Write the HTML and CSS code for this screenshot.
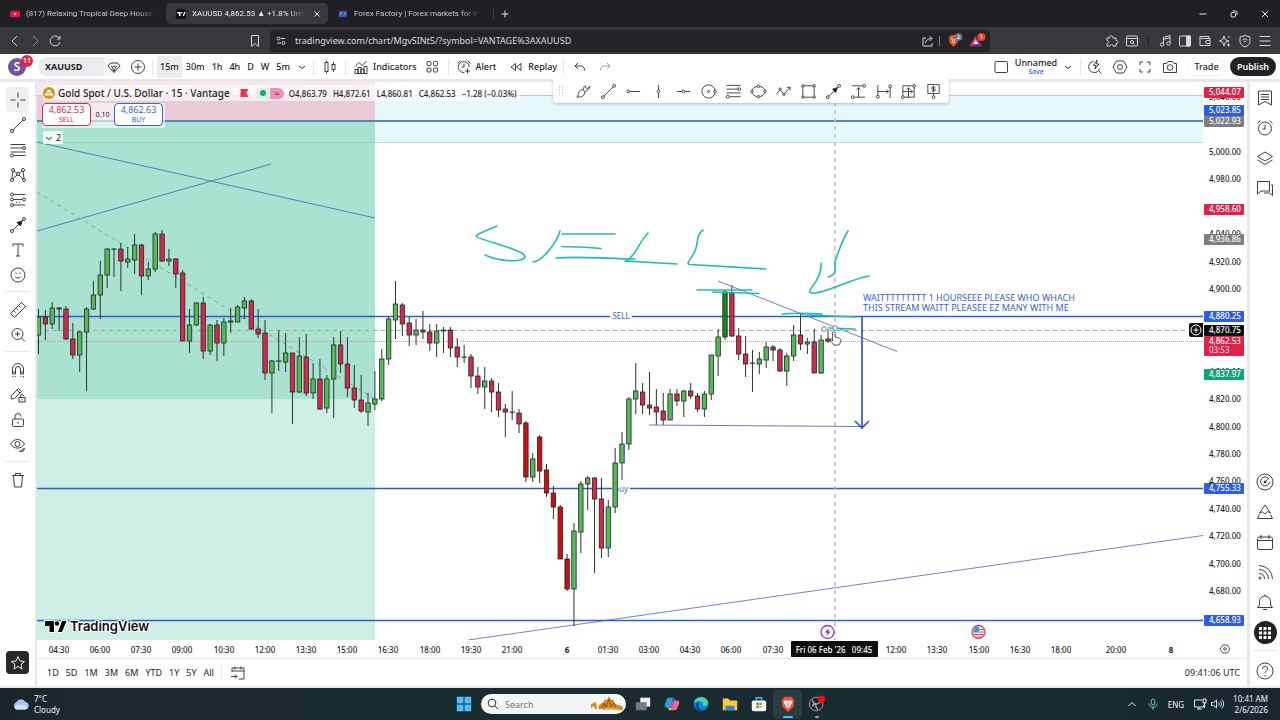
FILE: index.html
```html
<!DOCTYPE html>
<html lang="en">
<head>
  <meta charset="UTF-8" />
  <meta name="viewport" content="width=device-width, initial-scale=1.0" />
  <title>XAUUSD 4,862.53 ▲ +1.8% Unnamed</title>
  <link rel="stylesheet" href="styles.css">
</head>
<body>
  <!-- Browser tabs -->
  <header class="tabs">
    <a class="tab tab-first" href="#">
      <svg class="favicon" viewBox="0 0 12 12"><rect x="0" y="2" width="12" height="8" rx="2" fill="#f0103c"/><path d="M5 4.2v3.6L8 6z" fill="#fff"/></svg>
      <span class="tab-title">(817) Relaxing Tropical Deep House 2</span>
    </a>
    <div class="tab active">
      <svg class="favicon" viewBox="0 0 12 12"><rect x="0" y="0" width="12" height="12" rx="2" fill="#111"/><path d="M1.5 3.5h4v5h-2v-3h-2zM8 8.500l1.800-5h1.700l-2 5z" fill="#fff"/><circle cx="7" cy="4.500" r="1" fill="#fff"/></svg>
      <span class="tab-title">XAUUSD 4,862.53 ▲ +1.8% Unna</span>
      <button class="tab-close" aria-label="Close tab"><svg viewBox="0 0 8 8"><path d="M1.500 1.500l5 5M6.500 1.500l-5 5"/></svg></button>
    </div>
    <a class="tab" href="#">
      <svg class="favicon" viewBox="0 0 12 12"><path d="M1 2h10v8H0z" fill="#2c4a9c"/><path d="M3 9V4h3M3 6.500h2M7 9l1-5h2M8 6.500h2" stroke="#7d9ae0" fill="none"/></svg>
      <span class="tab-title">Forex Factory | Forex markets for the</span>
    </a>
    <span class="tab-sep"></span>
    <button class="new-tab" aria-label="New tab"><svg viewBox="0 0 8 8"><path d="M4 0.500v7M0.500 4h7"/></svg></button>
    <div class="window-buttons">
      <button aria-label="Minimize"><svg viewBox="0 0 8 8"><path d="M.5 4h7"/></svg></button>
      <button aria-label="Restore"><svg viewBox="0 0 8 8"><rect x="1" y="2.500" width="4.500" height="4.500" rx="1"/><path d="M3 1h2.500a1.500 1.500 0 0 1 1.500 1.500V5"/></svg></button>
      <button aria-label="Close"><svg viewBox="0 0 8 8"><path d="M1 1l6 6M7 1l-6 6"/></svg></button>
    </div>
  </header>

  <!-- Address row -->
  <nav class="navbar">
    <div class="nav-left">
      <button aria-label="Back"><svg viewBox="0 0 14 14"><path d="M9 2L4 7l5 5"/></svg></button>
      <button class="dim" aria-label="Forward"><svg viewBox="0 0 14 14"><path d="M5 2l5 5-5 5"/></svg></button>
      <button aria-label="Reload"><svg viewBox="0 0 14 14"><path d="M11.500 4.500A5 5 0 1 0 12 8M12 2v3H9"/></svg></button>
    </div>
    <button class="bookmark" aria-label="Bookmark"><svg viewBox="0 0 14 14"><path d="M3.500 1.500h7v11L7 9.500l-3.500 3z"/></svg></button>
    <div class="address">
      <svg viewBox="0 0 14 14"><circle cx="4.500" cy="4.500" r="1.500"/><path d="M7 4.500h4M3 9h4"/><circle cx="9.500" cy="9" r="1.500"/></svg>
      <label class="hidden" for="url">Address</label>
      <input id="url" type="text" value="tradingview.com/chart/MgvSINt5/?symbol=VANTAGE%3AXAUUSD">
      <svg viewBox="0 0 14 14"><path d="M5 4H2v8h9V9M4.500 9c.5-3 2.500-4.500 6-4.500M8.500 2L11 4.500 8.500 7"/></svg>
      <span class="address-sep"></span>
      <svg class="shield" viewBox="0 0 18 18"><path d="M4 5l2-2h5l2 2-.5 5.500-4 4.500-4-4.500z" fill="#f0512a" stroke="none"/><path d="M6 6.500l1.500 1v2L8.500 11l1-1.500v-2l1.500-1" stroke="#fff"/><circle cx="13.500" cy="5" r="3.800" fill="#6f7885" stroke="none"/><text x="13.500" y="7.200" class="mini">2</text></svg>
      <svg class="shield" viewBox="0 0 18 18"><path d="M8 4l6.500 10.500H1.500z" fill="#7a2a9c" stroke="none"/><path d="M8 4L1.500 14.500 8 11z" fill="#f04a3a" stroke="none"/><path d="M8 8l2.500 4h-5z" fill="#fff" stroke="none"/><circle cx="13.500" cy="5" r="4" fill="#f0432c" stroke="none"/><text x="13.500" y="7.200" class="mini">1</text></svg>
    </div>
    <div class="nav-right">
      <button aria-label="Extensions"><svg viewBox="0 0 14 14"><path d="M2 4h2.500c-.5-3 4-3 3.500 0h3v2.500c2.500-.3 2.500 3.500 0 3.200V12H8c0-2-3-2-3 0H2V9.500c2 0 2-3 0-3z"/></svg></button>
      <button aria-label="Search tabs"><svg viewBox="0 0 14 14"><rect x="1.500" y="2" width="11" height="10" rx="1"/><path d="M1.500 4.500h11M8 9l1.500 1.500"/><circle cx="7" cy="8" r="1.500"/></svg></button>
      <span class="nav-sep"></span>
      <button aria-label="Music"><svg viewBox="0 0 14 14"><path d="M5.500 10V3.500l6.500-2V9M5.500 5.500L12 3.500"/><circle cx="4" cy="10.500" r="1.700"/><circle cx="10.500" cy="9.500" r="1.700"/></svg></button>
      <button aria-label="Sidebar"><svg viewBox="0 0 14 14"><rect x="1.500" y="2" width="11" height="10" rx="1"/><path d="M8.500 2h4v10h-4z" fill="#ddd"/></svg></button>
      <button aria-label="Wallet"><svg viewBox="0 0 14 14"><path d="M11 4.500V2.500H2v9h10v-7H3M12 6.500H9a1.500 1.500 0 0 0 0 3h3"/></svg></button>
      <button aria-label="Leo"><svg viewBox="0 0 14 14"><path d="M6 2l1.300 3.700L11 7 7.300 8.300 6 12 4.700 8.300 1.500 7l3.200-1.300zM10.500 9.500v3M9 11h3M11 2v2"/></svg></button>
      <button aria-label="VPN"><svg viewBox="0 0 14 14"><path d="M7 1.500l5 1.500v4.500c0 2.500-2 4-5 5.500-3-1.500-5-3-5-5.500V3z"/><path d="M4.500 6c1.500-1.500 3.500-1.500 5 0M5.500 8c1-1 2-1 3 0"/></svg></button>
      <button aria-label="Menu"><svg viewBox="0 0 14 14"><path d="M1.500 2.500h11M1.500 7h11M1.500 11.500h11"/></svg></button>
    </div>
  </nav>

  <!-- Chart top toolbar -->
  <div class="topbar">
    <button class="avatar">S<span class="badge">11</span></button>
    <button class="symbol"><b>XAUUSD</b><svg class="icon" viewBox="0 0 18 18"><path d="M5.500 5h7l2.500 3-6 6.500L3 8zM6 8l1 1M8 8.500h2M11 9l1-1M7 8.500l2 5 2-5"/></svg></button>
    <button class="plus" aria-label="Compare"><svg class="icon" viewBox="0 0 18 18"><circle cx="9" cy="9" r="6.500"/><path d="M9 5.500v7M5.500 9h7"/></svg></button>
    <span class="sep"></span>
    <div class="intervals">
      <button class="selected">15m</button><button>30m</button><button>1h</button><button>4h</button><button>D</button><button>W</button><button>5m</button>
      <button aria-label="More intervals"><svg class="caret" viewBox="0 0 8 8"><path d="M1 3l3 2.500L7 3"/></svg></button>
    </div>
    <span class="sep"></span>
    <button class="square" aria-label="Chart type"><svg class="icon" viewBox="0 0 18 18"><path d="M5.500 2.500v2M5.500 13.500v2M12.500 4v2.500M12.500 11.500V14"/><rect x="4" y="4.500" width="3" height="9"/><rect x="11" y="6.500" width="3" height="5"/></svg></button>
    <span class="sep"></span>
    <button class="labelled indicators"><svg class="icon" viewBox="0 0 18 18"><path d="M3 15.500v-4h3v4M6 15.500V9.500h3v6M9 15.500v-4.500h3v4.500M12 15.500V8.500h3v7zM3 15.500h12M3 8.500l4-4 3 3 4.500-4.500"/></svg>Indicators</button>
    <button class="square" aria-label="Layouts"><svg class="icon" viewBox="0 0 18 18"><rect x="4" y="3.500" width="4" height="4" rx="1"/><rect x="10.500" y="3.500" width="4" height="4" rx="1"/><rect x="4" y="10" width="4" height="4" rx="1"/><rect x="10.500" y="10" width="4" height="4" rx="1"/></svg></button>
    <span class="sep"></span>
    <button class="labelled alert"><svg class="icon" viewBox="0 0 18 18"><path d="M14.300 9a5.500 5.500 0 1 0-5 5.500M9 5.500V9H6.500M2.500 5.500l3-3M12.500 2.500l3 3M12.500 10.500v5M10 13h5"/></svg>Alert</button>
    <button class="labelled replay"><svg class="icon" viewBox="0 0 18 18"><path d="M8.500 5.500v7L4 9zM14 5.500v7L9.500 9z"/></svg>Replay</button>
    <span class="sep"></span>
    <button class="square wide" aria-label="Undo"><svg class="icon" viewBox="0 0 18 18"><path d="M7 5L4 8l3 3M4 8h5.500c3 0 4 1.500 4 4.500"/></svg></button>
    <button class="square dim" aria-label="Redo"><svg class="icon" viewBox="0 0 18 18"><path d="M11 5l3 3-3 3M14 8H8.500c-3 0-4 1.500-4 4.500"/></svg></button>

    <div class="topbar-right">
      <button class="square" aria-label="Layout setup"><svg class="icon" viewBox="0 0 18 18"><rect x="3" y="3.500" width="12.500" height="11" rx="1"/></svg></button>
      <button class="layout-name">Unnamed<span>Save</span></button>
      <button class="caret-btn" aria-label="Manage layouts"><svg class="caret" viewBox="0 0 8 8"><path d="M1 3l3 2.500L7 3"/></svg></button>
      <span class="sep"></span>
      <button class="square" aria-label="Quick search"><svg class="icon" viewBox="0 0 18 18"><path d="M7.500 3.500a5.500 5.500 0 1 0 6 7M12.500 12.500l3 3M11 2L7.500 7.500h2.500L9 11l4-5h-2.500z"/></svg></button>
      <button class="square" aria-label="Settings"><svg class="icon" viewBox="0 0 18 18"><path d="M5.500 3h7L16 9l-3.500 6h-7L2 9z"/><circle cx="9" cy="9" r="2.500"/></svg></button>
      <button class="square" aria-label="Fullscreen"><svg class="icon" viewBox="0 0 18 18"><path d="M4 7V4h3M11 4h3v3M14 11v3h-3M7 14H4v-3"/></svg></button>
      <button class="square" aria-label="Snapshot"><svg class="icon" viewBox="0 0 18 18"><path d="M2.500 5.500h3l1.500-2h4.500l1.500 2h2.500v9h-13z"/><circle cx="9" cy="9.500" r="2.800"/></svg></button>
      <button class="trade">Trade</button>
      <button class="publish">Publish</button>
    </div>
  </div>

  <main class="workspace">
    <!-- Drawing tools -->
    <aside class="tools">
      <button class="selected" aria-label="Cross"><svg class="icon" viewBox="0 0 18 18"><path d="M9 1.500v5M9 11.500v5M1.500 9h5M11.500 9h5"/></svg></button>
      <button aria-label="Trend line"><svg class="icon" viewBox="0 0 18 18"><path d="M4 14L14 4"/><circle cx="3" cy="15" r="1.500"/><circle cx="15" cy="3" r="1.500"/></svg></button>
      <button aria-label="Fib retracement"><svg class="icon" viewBox="0 0 18 18"><path d="M1.500 3.500h15M1.500 7h12M1.500 11h15M4.500 14.500h12"/><circle cx="15" cy="7" r="1.500"/><circle cx="3" cy="14.500" r="1.500"/></svg></button>
      <button aria-label="Patterns"><svg class="icon" viewBox="0 0 18 18"><circle cx="4" cy="4" r="1.500"/><circle cx="14" cy="4" r="1.500"/><circle cx="9" cy="8" r="1.500"/><circle cx="3" cy="14" r="1.500"/><circle cx="15" cy="14" r="1.500"/><path d="M4 5.500L3 12.500M14 5.500l1 7M5 5l3 2.500M10 7.500L13 5M4 13l4-4M10 9l4 4"/></svg></button>
      <button aria-label="Forecasting"><svg class="icon" viewBox="0 0 18 18"><path d="M4.500 3.500h12M4.500 8.500h9M4.500 14h12"/><circle cx="3" cy="3.500" r="1.500"/><circle cx="3" cy="8.500" r="1.500"/><circle cx="15" cy="8.500" r="1.500"/><circle cx="3" cy="14" r="1.500"/><path d="M7 11.500h6" stroke-dasharray="1 2"/></svg></button>
      <button aria-label="Arrow"><svg class="icon" viewBox="0 0 18 18"><path d="M4 14L14 4"/><circle cx="3" cy="15" r="1.500"/><circle cx="15" cy="3" r="1.500"/><path d="M13 5l-1.500 5L8 6.500z" fill="#111"/></svg></button>
      <button aria-label="Text"><svg class="icon" viewBox="0 0 18 18"><path d="M4 5.500V3h10v2.500M9 3v12M7 15h4"/></svg></button>
      <button aria-label="Icons"><svg class="icon" viewBox="0 0 18 18"><circle cx="9" cy="9" r="7"/><path d="M6 10.500c1.500 2 4.500 2 6 0M7 6.500v1.500M11 6.500v1.500"/></svg></button>
      <hr>
      <button aria-label="Measure"><svg class="icon" viewBox="0 0 18 18"><path d="M1.500 12.500l11-11 4 4-11 11zM5 10l1.500 1.500M7.500 7.500L9 9M10 5l1.500 1.500"/></svg></button>
      <button aria-label="Zoom in"><svg class="icon" viewBox="0 0 18 18"><circle cx="8.500" cy="8" r="5.500"/><path d="M8.500 5.500v5M6 8h5M12.500 12l3.500 3.500"/></svg></button>
      <hr>
      <button aria-label="Magnet"><svg class="icon" viewBox="0 0 18 18"><path d="M3.500 13V8a5.500 5.500 0 0 1 11 0v5h-3V8a2.500 2.500 0 0 0-5 0v5zM3.500 11h3M11.500 11h3M4 15v1.500M6.500 15v1M12 15v1M14.500 15v1.500"/></svg></button>
      <button aria-label="Stay in drawing mode"><svg class="icon" viewBox="0 0 18 18"><path d="M2.500 9.500l7-7 3 3-7 7-3.500.5zM8 4l3 3"/><rect x="10" y="11.500" width="6" height="4.500"/><path d="M11.500 11.500V10a1.500 1.500 0 0 1 3 0M13 13v1.500"/></svg></button>
      <button aria-label="Lock drawings"><svg class="icon" viewBox="0 0 18 18"><rect x="3.500" y="8" width="11" height="7.500" rx="1"/><path d="M6 8V5.500a3 3 0 0 1 6 0M9 10.500v2.500"/></svg></button>
      <button aria-label="Hide drawings"><svg class="icon" viewBox="0 0 18 18"><path d="M1.500 8c4-6 10-6 14 0-4 5.500-10 5.500-14 0zM10.500 15.500l5-3.500-1 3z"/><circle cx="8.500" cy="8" r="2.500"/></svg></button>
      <hr>
      <button aria-label="Delete"><svg class="icon" viewBox="0 0 18 18"><path d="M3 4.500h12M6.500 4.500V2.500h5v2M4.500 4.500l1 11.500h7l1-11.500"/></svg></button>
      <button class="favorites" aria-label="Favorites"><svg class="icon" viewBox="0 0 18 18"><path d="M9 2.500l2 4.500 4.500.5-3.500 3 1 4.500-4-2.500L5 15l1-4.500-3.500-3L7 7z"/></svg></button>
    </aside>

    <section class="center">
      <div class="chart-row">
        <div class="pane">
          <svg id="chart" class="chart" role="img" aria-label="XAUUSD 15 minute candles">
            <!-- coordinates are in window space, shifted to the pane origin -->
            <g transform="translate(-37 -82)">
              <rect x="37" y="95" width="4000" height="47" fill="#e6f8fa"/>
              <rect x="37" y="82" width="338" height="13" fill="#f8e6ec"/>
              <rect x="37" y="95" width="338" height="26" fill="#e9cbd6"/>
              <rect x="37" y="121" width="338" height="278" fill="#a9e2d0"/>
              <rect x="37" y="399" width="338" height="242" fill="#cfeee5"/>
              <path d="M37 95.500H4000" stroke="#afcbe6"/>
              <path d="M37 142.500H375" stroke="#93d3c1"/>
              <path d="M375 142.500H4000" stroke="#bfe0da"/>
              <path d="M37 121H4000" stroke="#5b84b8" stroke-width="2"/>
              <path d="M37 142L375 218M37 231L271 164" stroke="#4b83bb" fill="none"/>
              <path d="M37 192L375 399" stroke="#7fa398" stroke-dasharray="4 4" fill="none"/>
              <path d="M468 640L1203 535.500" stroke="#7382cf" fill="none"/>
              <path d="M37 316.500H610M632 316.500H4000M37 488.500H612M630 488.500H4000M37 620.500H4000" stroke="#2d5bdc" stroke-width="1.500"/>
              <path d="M37 330.500H4000" stroke="#a5a5a9" stroke-dasharray="4 4"/>
              <path d="M37 341.500H4000" stroke="#e08d9c" stroke-dasharray="1 1"/>
              <path d="M835 102V640" stroke="#bfbfc4" stroke-dasharray="4 4" stroke-width="1.500"/>
              <text class="line-label" x="621" y="319">SELL</text>
              <text class="line-label" x="621" y="492">buy</text>
              <g id="candles"></g>
              <path d="M718 281L897 351.500M649 425L862 426.500" stroke="#6c7ad0" fill="none"/>
              <path d="M862 317v111M855 421l7 7 7-7" stroke="#3158c8" stroke-width="1.700" fill="none"/>
              <g class="brush">
                <path d="M497 226C488 230 478 233 476 236C478 240 522 249 525 256C526 263 500 262 485 255"/>
                <path d="M560 231C557 242 543 261 533 262"/>
                <path d="M562 234h53M562 246.500c14 0 25 1 39 2M556 258c25-2 53 1 79 1"/>
                <path d="M648 233C638 243 637 255 626 261L677 264"/>
                <path d="M703 230C695 236 699 245 694 253C691 259 685 264 690 264.500L766 269"/>
                <path d="M697 290h55M713 292l46 1.500"/>
                <path d="M848 231C841 242 839 252 835 261V271C835 275 831 276 828 277"/>
                <path d="M821 263C822 276 813 285 810 290C808 295 817 293 824 291C840 286 853 279 869 276"/>
                <path d="M782 314c12-1 27-1 40 0M807 315l49 2M829 328l26 1"/>
              </g>
              <circle cx="824" cy="329" r="2.300" fill="#fff" stroke="#5681cc"/>
              <circle cx="835" cy="328" r="2.300" fill="#fff" stroke="#5681cc"/>
              <text class="note" x="863" y="301">WAITTTTTTTTT 1 HOURSEEE PLEASE WHO WHACH</text>
              <text class="note" x="863" y="311">THIS STREAM WAITT PLEASEE EZ MANY WITH ME</text>
              <circle cx="827.500" cy="632" r="6.500" fill="#fff" stroke="#8a3fb0" stroke-width="1.300"/>
              <path d="M829 628l-4 4.500h2.500l-1 3.500 4-4.500h-2.500z" fill="#7b1fa2"/>
              <circle cx="978.500" cy="632" r="6.500" fill="#fff" stroke="#d0445c" stroke-width="1.300"/>
              <path d="M974 629.500h10M973 632h11M973.500 634.500h10M975 637h7" stroke="#e0405a"/>
              <path d="M973.500 632v-3l2.500-2.500h3v5.500z" fill="#4a90e2"/>
              <path d="M832.500 341v-8c0-2 2.500-2 2.500 0v4l5 1.500c1 .5 1 2 .5 3.500l-1.500 3h-5l-3-4c-1.500-2 0-3 1.500-1z" fill="#fff" stroke="#333" stroke-width=".8"/>
            </g>
          </svg>

          <div class="legend">
            <svg class="coin" viewBox="0 0 12 12"><circle cx="6" cy="6" r="6" fill="#c99a1e"/><path d="M4.500 3.200h3l1 2.300h-5zM2.500 6.200h3L6 8.500H1.800zM6.500 6.200h3l.7 2.300H6.300z" fill="#fff"/></svg>
            <span class="legend-name">Gold Spot / U.S. Dollar · 15 · Vantage</span>
            <svg class="flag" viewBox="0 0 9 9"><path d="M0 0h9L6.500 4.500 9 9H0z" fill="#f23645"/></svg>
            <span class="status"><i class="open"></i><i class="approx">≈</i></span>
            <span class="ohlc"><span>O4,863.79</span><span>H4,872.61</span><span>L4,860.81</span><span>C4,862.53</span><span>−1.28 (−0.03%)</span></span>
          </div>
          <div class="orders">
            <button class="sell">4,862.53<span>SELL</span></button>
            <span class="spread">0.10</span>
            <button class="buy">4,862.63<span>BUY</span></button>
          </div>
          <button class="collapse"><svg class="caret" viewBox="0 0 8 8"><path d="M1 3l3 2.500L7 3"/></svg>2</button>

          <div class="watermark">
            <svg viewBox="0 0 20 11"><path d="M0 0h9v11H4.500V5H0zM13 11l4-11h4.500L17 11z"/><circle cx="12" cy="2.500" r="2.300"/></svg>
            TradingView
          </div>

          <div class="favbar">
            <svg class="grip" viewBox="0 0 6 10"><path d="M1 1h1M4 1h1M1 4h1M4 4h1M1 7h1M4 7h1M1 10h1M4 10h1"/></svg>
            <button aria-label="Brush"><svg class="icon" viewBox="0 0 18 18"><path d="M2 15c2-1 1-6 4-7.500 2-1 5 1 4 4-1 3-4 3.500-8 3.500zM9 7c0-3 1-4 2-4 0 3 2 4 5 .5-1 3-3 5-5.500 5.500"/></svg></button>
            <button aria-label="Trend line"><svg class="icon" viewBox="0 0 18 18"><path d="M4 14L14 4"/><circle cx="3" cy="15" r="1.500"/><circle cx="15" cy="3" r="1.500"/></svg></button>
            <button aria-label="Horizontal ray"><svg class="icon" viewBox="0 0 18 18"><path d="M5 9h11"/><circle cx="3.500" cy="9" r="1.500"/></svg></button>
            <button aria-label="Vertical line"><svg class="icon" viewBox="0 0 18 18"><path d="M9 2v5.500M9 10.500V16"/><circle cx="9" cy="9" r="1.500"/></svg></button>
            <button aria-label="Horizontal line"><svg class="icon" viewBox="0 0 18 18"><path d="M2 9h5.500M10.500 9H16"/><circle cx="9" cy="9" r="1.500"/></svg></button>
            <button aria-label="Circle"><svg class="icon" viewBox="0 0 18 18"><circle cx="9" cy="9" r="7"/><circle cx="9" cy="9" r="1"/><circle cx="16" cy="9" r="1.300" fill="#fff"/></svg></button>
            <button aria-label="Fib retracement"><svg class="icon" viewBox="0 0 18 18"><path d="M1.500 2.500h15M1.500 6.500h12M1.500 10.500h15M4.500 14.500h12"/><circle cx="15" cy="6.500" r="1.500"/><circle cx="3" cy="14.500" r="1.500"/></svg></button>
            <button aria-label="Ellipse"><svg class="icon" viewBox="0 0 18 18"><ellipse cx="9" cy="9" rx="7" ry="5.500"/><g fill="#fff"><circle cx="2" cy="9" r="1.300"/><circle cx="16" cy="9" r="1.300"/><circle cx="9" cy="3.500" r="1.300"/><circle cx="9" cy="14.500" r="1.300"/></g></svg></button>
            <button aria-label="Path"><svg class="icon" viewBox="0 0 18 18"><path d="M1.500 12l4-5 4 5L16 4.500M12.500 4.500H16V8"/><circle cx="5.500" cy="6.500" r="1.200" fill="#fff"/><circle cx="9.500" cy="12" r="1.200" fill="#fff"/></svg></button>
            <button aria-label="Rectangle"><svg class="icon" viewBox="0 0 18 18"><rect x="3" y="3" width="12" height="12"/><g fill="#fff"><circle cx="3" cy="3" r="1.300"/><circle cx="15" cy="3" r="1.300"/><circle cx="3" cy="15" r="1.300"/><circle cx="15" cy="15" r="1.300"/></g></svg></button>
            <button aria-label="Arrow"><svg class="icon" viewBox="0 0 18 18"><path d="M4 14L14 4"/><circle cx="3" cy="15" r="1.500"/><circle cx="15" cy="3" r="1.500"/><path d="M13 5l-1.500 5L8 6.500z" fill="#111"/></svg></button>
            <button aria-label="Price range"><svg class="icon" viewBox="0 0 18 18"><path d="M2 3h11M5 15h11M9 15V5M7 7l2-2 2 2"/><circle cx="15" cy="3" r="1.500"/><circle cx="3" cy="15" r="1.500"/></svg></button>
            <button aria-label="Date range"><svg class="icon" viewBox="0 0 18 18"><path d="M3 2v11M16 5v11M3 9h12M12 7l2 2-2 2"/><circle cx="3" cy="14.500" r="1.500"/><circle cx="16" cy="3.500" r="1.500"/></svg></button>
            <button aria-label="Date and price range"><svg class="icon" viewBox="0 0 18 18"><path d="M3 3h10.500M3 3v10.500M15 4.500V15M4.500 15H15M3 9h10M9 5v10M7 7l2-2 2 2M11.500 7l2 2-2 2"/><circle cx="15" cy="3" r="1.500"/><circle cx="3" cy="15" r="1.500"/></svg></button>
            <button aria-label="Price label"><svg class="icon" viewBox="0 0 18 18"><path d="M3 1.500h12v9.500H3zM9 11v2.500M11 4.300H8c-1.500 0-1.500 1.900 0 1.900h2c1.500 0 1.500 2 0 2H7M9 3v6.500"/><circle cx="9" cy="15" r="1.500"/></svg></button>
          </div>
        </div>
        <svg id="price-axis" class="price-axis"></svg>
        <button class="add-alert" aria-label="Add order"><svg viewBox="0 0 14 14"><circle cx="7" cy="7" r="5"/><path d="M7 4.500v5M4.500 7h5"/></svg></button>
      </div>

      <div class="time-row">
        <svg id="time-axis" class="time-axis"></svg>
        <button class="axis-settings" aria-label="Axis settings"><svg class="icon" viewBox="0 0 18 18"><path d="M6.500 4.500h5L14.500 9l-3 4.500h-5L3.500 9z"/><circle cx="9" cy="9" r="1.500"/></svg></button>
      </div>

      <div class="range-row">
        <div class="ranges">
          <button>1D</button><button>5D</button><button>1M</button><button>3M</button><button>6M</button><button>YTD</button><button>1Y</button><button>5Y</button><button>All</button>
        </div>
        <button class="goto" aria-label="Go to date"><svg class="icon" viewBox="0 0 18 18"><path d="M3 8V4h12v11H10M3 7h12M6 2.500v3M12 2.500v3M2 12.500h6M6 10.500l2 2-2 2"/></svg></button>
        <button class="clock">09:41:06 UTC</button>
      </div>
    </section>

    <!-- Widget bar -->
    <aside class="widgets">
      <button aria-label="Watchlist"><svg class="icon" viewBox="0 0 18 18"><path d="M2.500 2h13v14L9 12.500 2.500 16zM5 5.500h8M5 8h8M5 10.500h8"/></svg></button>
      <button aria-label="Alerts"><svg class="icon" viewBox="0 0 18 18"><circle cx="9" cy="9.500" r="6.500"/><path d="M9 6v4H6.500M1.500 4.500l3-3M13.500 1.500l3 3"/></svg></button>
      <button aria-label="Object tree"><svg class="icon" viewBox="0 0 18 18"><path d="M9 3l7.500 4.500L9 12 1.500 7.500zM1.500 11L9 15.500l7.500-4.500"/></svg></button>
      <button aria-label="Chat"><svg class="icon" viewBox="0 0 18 18"><path d="M1.500 15V2.500h12V12H5zM15 6h1.500v10.500L13.500 14H8"/></svg></button>
      <span class="grow"></span>
      <button aria-label="Screener"><svg class="icon" viewBox="0 0 18 18"><circle cx="9" cy="9" r="8"/><path d="M12.500 5.500A4.500 4.500 0 1 0 13.500 9M9 9l4.500-4.500"/><circle cx="9" cy="9" r="1" fill="#222"/></svg></button>
      <button aria-label="Pine"><svg class="icon" viewBox="0 0 18 18"><path d="M9 2l5.500 8-3-1.500L9 11 6.500 9 3.500 10zM3.500 11.500l-2 4h15l-2-4"/></svg></button>
      <button aria-label="Calendar"><svg class="icon" viewBox="0 0 18 18"><rect x="1.500" y="4" width="15" height="12.500" rx="1.500"/><path d="M1.500 7.500h15M5 2v4M13 2v4"/></svg></button>
      <button aria-label="News"><svg class="icon" viewBox="0 0 18 18"><path d="M3 2.500A13.500 13.500 0 0 1 16.500 16M3 6.500A9.500 9.500 0 0 1 12.500 16M3 10.500A5.500 5.500 0 0 1 8.500 16"/><circle cx="4" cy="15" r="1"/></svg></button>
      <button aria-label="Notifications"><svg class="icon" viewBox="0 0 18 18"><path d="M1.500 14.500l2-2.500V8.500a5.500 5.500 0 0 1 11 0V12l2 2.500zM9 1.500V3M7 16.500h4"/></svg></button>
      <button class="apps" aria-label="Products"><svg viewBox="0 0 18 18"><path d="M3 3h3v3H3zM7.500 3h3v3h-3zM12 3h3v3h-3zM3 7.500h3v3H3zM7.500 7.500h3v3h-3zM12 7.500h3v3h-3zM3 12h3v3H3zM7.500 12h3v3h-3zM12 12h3v3h-3z"/></svg></button>
      <hr>
      <button aria-label="Help"><svg class="icon" viewBox="0 0 18 18"><circle cx="9" cy="9" r="8"/><path d="M6.500 7c0-3.500 5-3.500 5 0 0 2-2.500 2-2.500 4M9 13v1.500"/></svg></button>
    </aside>
  </main>

  <!-- Taskbar -->
  <footer class="taskbar">
    <div class="weather">
      <svg viewBox="0 0 18 14"><path d="M4.500 12.500a4 4 0 0 1 0-7.500 5 5 0 0 1 9 0 3.800 3.800 0 0 1 0 7.500z" fill="#a9c4f5"/><path d="M3 12a3 3 0 0 1 3-4c4-1 8 0 9 3l-1.500 1.500h-9z" fill="#d5e2fb"/></svg>
      <div>7°C<br>Cloudy</div>
    </div>
    <div class="dock">
      <button aria-label="Start"><svg viewBox="0 0 20 20"><path d="M2 2h7.500v7.500H2zM10.500 2H18v7.500h-7.500zM2 10.500h7.500V18H2zM10.500 10.500H18V18h-7.500z" fill="#4cc2f5"/></svg></button>
      <div class="search">
        <svg viewBox="0 0 12 12"><circle cx="5" cy="5" r="3.800"/><path d="M8 8l3 3"/></svg>
        <label class="hidden" for="search">Search</label>
        <input id="search" type="search" placeholder="Search">
        <svg class="doodle" viewBox="0 0 34 18"><path d="M1 9l5-2 1 7H5l-1-3-3 2zM8 14c1-6 4-6 6-7l1-3 2 1 2-4 2 4 2-1 2 5 7 2 1 4z" fill="#d88a1c"/><path d="M12 13l2-5 2 4 3-8 2 8 3-4 2 4" stroke="#8c4f12" fill="none"/><path d="M13 15c5-2 12-1 17 0" stroke="#c9b797" stroke-width="1.500" fill="none"/></svg>
      </div>
      <button aria-label="Task view"><svg viewBox="0 0 20 20"><rect x="7" y="3" width="11" height="10" fill="#eee"/><rect x="2" y="8" width="12" height="9" fill="#77797c"/></svg></button>
      <button aria-label="Copilot"><svg viewBox="0 0 20 20"><path d="M6 3h5l-3 11H4c-3 0-2-4-1-6s1-5 3-5z" fill="#2a9ed8"/><path d="M11 3h2l1 4h-4z" fill="#2862c8"/><path d="M12 6h4c3 0 2 4 1 6s-1 5-4 5H9z" fill="#f06a8c"/><path d="M5 14h5l-1 3H7z" fill="#f5c431"/><path d="M9 7h4l-2 7H7z" fill="#a05adf"/></svg></button>
      <button aria-label="Edge"><svg viewBox="0 0 20 20"><circle cx="10" cy="10" r="8" fill="#1585d8"/><path d="M2 9c1-8 15-9 16 0 0 4-5 4-6 2 1-3-3-5-6-4-2 .500-3 1-4 2z" fill="#4bd2a0"/><path d="M8 10c-2 3 1 7 6 6-5 4-11 0-10-5 1-3 4-3 4-1z" fill="#0c4fa0"/></svg></button>
      <button aria-label="Explorer"><svg viewBox="0 0 20 20"><path d="M2 4h6l2 2h8v11H2z" fill="#f9c93c"/><path d="M5 12h10v5H5z" fill="#2d87cf"/></svg></button>
      <button aria-label="Store"><svg viewBox="0 0 20 20"><path d="M7 6V3h6v3" stroke="#49b7ea" stroke-width="1.500" fill="none"/><rect x="2" y="6" width="16" height="12" rx="2" fill="#f4f6f8"/><path d="M7 8.500h2.700v2.700H7z" fill="#e5502c"/><path d="M10.300 8.500H13v2.700h-2.700z" fill="#7cb51a"/><path d="M7 11.800h2.700v2.700H7z" fill="#1e9be0"/><path d="M10.300 11.800H13v2.700h-2.700z" fill="#f8b81c"/></svg></button>
      <button class="running" aria-label="Brave"><svg viewBox="0 0 20 20"><path d="M6 2h8l3 4-1 7-6 6-6-6-1-7z" fill="#f4512c"/><path d="M6 6l3 .5h2L14 6l1 2-2 3-1 2-2 2-2-2-1-2-2-3z" fill="#fff"/><path d="M8 8.500l2 2 2-2M10 10v3" stroke="#f4512c" fill="none"/></svg></button>
      <button class="open" aria-label="OBS"><svg viewBox="0 0 20 20"><circle cx="9" cy="10" r="7.500" fill="#222" stroke="#aaa"/><path d="M5 5c0 4 3 5 4 5s4-1 5-4M9 10c-1 2 0 5 2 6M5 13c0-2 2-3 4-3" stroke="#aaa" stroke-width="1.500" fill="none"/><circle cx="15" cy="4.500" r="4" fill="#f50d14"/></svg></button>
    </div>
    <div class="tray">
      <svg viewBox="0 0 12 12"><path d="M2.500 8L6 4.500 9.500 8"/></svg>
      <svg class="mic" viewBox="0 0 12 12"><rect x="4.200" y="1" width="3.600" height="6" rx="1.800"/><path d="M2 5.500c0 5 8 5 8 0M6 9.500V12"/></svg>
      <span>ENG</span>
      <svg class="wide" viewBox="0 0 14 12"><path d="M9 2H1.500v7h9V7M4 11h5M6 9v2M10 1h3v4h-3zM11.500 5v5"/></svg>
      <svg class="wide" viewBox="0 0 14 12"><path d="M1.500 4.500h2L6.500 2v8l-3-2.500h-2zM8.500 4.500c1 1 1 2 0 3M10 3c2 2 2 4 0 6M11.500 1.500c3 3 3 6 0 9"/></svg>
      <div class="datetime">10:41 AM<br>2/6/2026</div>
    </div>
  </footer>
  <script src="script.js"></script>
</body>
</html>
```
FILE: styles.css
```css
* {
  box-sizing: border-box;
}
body {
  margin: 0;
  height: 100vh;
  display: flex;
  flex-direction: column;
  overflow: hidden;
  background: #e8e8eb;
  color: #1c1c1f;
  font-family: "Noto Sans", "Open Sans", sans-serif;
  font-size: 9px;
}
button, input {
  font: inherit;
  color: inherit;
  border: none;
  background: none;
  padding: 0;
  margin: 0;
}
button {
  display: flex;
  align-items: center;
  justify-content: center;
  flex: none;
  cursor: pointer;
}
svg {
  display: block;
  flex: none;
}
.hidden {
  display: none;
}
.icon {
  width: 18px;
  height: 18px;
  fill: none;
  stroke: #2a2a2d;
  stroke-width: 0.9;
}
.caret {
  width: 8px;
  height: 8px;
  fill: none;
  stroke: #2a2a2d;
}

/* Browser */
.tabs {
  display: flex;
  align-items: center;
  height: 27px;
  flex: none;
  background: #1f1f24;
  color: #c9c9cc;
  font-family: Roboto, "Noto Sans", sans-serif;
  font-size: 8px;
}
.tab {
  display: flex;
  align-items: center;
  gap: 6px;
  width: 162px;
  height: 21px;
  padding: 0 10px;
  color: inherit;
  text-decoration: none;
}
.tab-first {
  width: 166px;
}
.tab.active {
  background: #38383c;
  border-radius: 5px;
  color: #f0f0f0;
}
.favicon {
  width: 10px;
  height: 10px;
}
.tab-title {
  flex: 1;
  overflow: hidden;
  white-space: nowrap;
  mask-image: linear-gradient(to right, #000 85%, transparent);
}
.tabs button svg {
  width: 8px;
  height: 8px;
  fill: none;
  stroke: #e6e6e6;
}
.tab-close {
  width: 12px;
  margin-right: -5px;
}
.tab-sep {
  width: 1px;
  height: 12px;
  margin: 0 5px 0 3px;
  background: #3a3a3f;
}
.new-tab {
  width: 12px;
}
.window-buttons {
  display: flex;
  margin-left: auto;
}
.window-buttons button {
  width: 31px;
}
.navbar {
  display: flex;
  align-items: center;
  height: 27px;
  flex: none;
  background: #38383c;
}
.navbar svg {
  width: 14px;
  height: 14px;
  fill: none;
  stroke: #d6d6d9;
}
.navbar .dim {
  opacity: 0.5;
}
.nav-left {
  display: flex;
  padding-left: 5px;
}
.nav-left button {
  width: 20px;
}
.bookmark {
  width: 30px;
  margin-left: 175px;
}
.address {
  display: flex;
  align-items: center;
  flex: 0 1 720px;
  height: 22px;
  padding: 0 4px;
  border-radius: 4px;
  background: #232328;
  color: #dcdcdf;
}
.address input {
  flex: 1;
  margin-left: 7px;
}
.address .shield {
  width: 18px;
  height: 18px;
  margin-left: 5px;
}
.address-sep {
  width: 1px;
  height: 10px;
  margin-left: 4px;
  background: #77777c;
}
.mini {
  font-size: 6px;
  fill: #fff;
  stroke: none;
  text-anchor: middle;
}
.nav-right {
  display: flex;
  align-items: center;
  justify-content: flex-end;
  flex: 1;
  padding-right: 5px;
}
.nav-right button {
  width: 20px;
}
.nav-sep {
  width: 1px;
  height: 10px;
  margin: 0 6px;
  background: #222;
}

/* Chart toolbar */
.topbar {
  display: flex;
  align-items: center;
  height: 25px;
  flex: none;
  margin-bottom: 3px;
  padding: 0 4px 0 8px;
  background: #fff;
  font-weight: 500;
}
.topbar .sep {
  width: 1px;
  height: 16px;
  background: #e6e6e8;
}
.avatar {
  position: relative;
  width: 18px;
  height: 18px;
  border-radius: 9px;
  background: #74529e;
  color: #fff;
  font-size: 12px;
  font-weight: 600;
}
.badge {
  position: absolute;
  top: -3px;
  left: 13px;
  width: 12px;
  height: 12px;
  border-radius: 6px;
  background: #e0264c;
  font-size: 7px;
  line-height: 12px;
}
.symbol {
  justify-content: space-between;
  width: 85px;
  height: 19px;
  margin-left: 12px;
  padding-left: 7px;
  border-radius: 10px;
  background: linear-gradient(to right, #ececee 66px, #f7f7f8 66px);
}
.plus {
  width: 29px;
}
.intervals {
  display: flex;
  align-items: center;
  padding: 0 2px 0 4px;
}
.intervals button {
  height: 22px;
  padding: 0 3px;
  margin-right: 1px;
}
.intervals .selected {
  background: #ececee;
}
.intervals button:last-child {
  padding: 0 4px;
}
.square {
  width: 25px;
  height: 22px;
}
.topbar > .square {
  width: 31px;
}
.topbar .dim {
  width: 20px;
  opacity: 0.5;
}
.labelled {
  gap: 3px;
}
.indicators {
  padding-left: 6px;
}
.alert {
  padding-left: 6px;
}
.replay {
  padding: 0 6px 0 11px;
}
.topbar-right {
  display: flex;
  align-items: center;
  margin-left: auto;
}
.layout-name {
  flex-direction: column;
  width: 46px;
  line-height: 10px;
}
.layout-name span {
  color: #2962ff;
  font-size: 7px;
  line-height: 7px;
}
.caret-btn {
  width: 18px;
}
.topbar-right .sep {
  margin: 0 1px 0 3px;
}
.trade {
  width: 39px;
  height: 18px;
  margin: 0 4px 0 5px;
  border: 1px solid #f2f2f3;
  border-radius: 9px;
}
.publish {
  width: 46px;
  height: 19px;
  border-radius: 10px;
  background: #222225;
  color: #fff;
  font-weight: 600;
}

/* Workspace */
.workspace {
  display: grid;
  grid-template-columns: 35px 1fr 31px;
  gap: 2px;
  flex: 1;
  min-height: 0;
  margin-bottom: 2px;
}
.tools, .widgets {
  display: flex;
  flex-direction: column;
  align-items: center;
  background: #fff;
}
.tools {
  padding: 5px 0 12px;
}
.tools button {
  width: 23px;
  height: 25px;
}
.tools .selected {
  border-radius: 4px;
  background: #efeff1;
}
.tools hr, .widgets hr {
  width: 25px;
  height: 1px;
  margin: 4px 0 5px;
  border: none;
  background: #e6e6e8;
}
.tools .favorites {
  height: 23px;
  margin-top: auto;
  border-radius: 4px;
  background: #28282b;
}
.favorites .icon {
  stroke: #fff;
}
.widgets {
  margin-left: 1px;
  padding: 1px 0 0;
}
.widgets button {
  width: 23px;
  height: 30px;
}
.widgets .grow {
  flex: 1;
}
.widgets .apps {
  height: 23px;
  margin: 4px 0 2px;
  border-radius: 12px;
  background: #222225;
}
.apps svg {
  width: 18px;
  height: 18px;
  fill: #fff;
}
.center {
  display: flex;
  flex-direction: column;
  min-width: 0;
  background: #fff;
}
.chart-row {
  display: flex;
  flex: 1;
  min-height: 0;
  position: relative;
}
.pane {
  position: relative;
  flex: 1;
  min-width: 0;
}
.chart {
  width: 100%;
  height: 100%;
}
.brush path {
  fill: none;
  stroke: #20bdb6;
  stroke-width: 1.6;
  stroke-linecap: round;
}
.line-label {
  font-size: 8px;
  fill: #3a62d6;
  text-anchor: middle;
}
.note {
  font-size: 9px;
  fill: #3a5fd0;
}
.candle {
  stroke: #1b2a1f;
  stroke-width: 0.8;
}
.candle.up { fill: #58b75a; }
.candle.down { fill: #d3294f; }
.candle.strong-up { fill: #108a14; }
.candle.strong-down { fill: #d20b12; }

.legend {
  position: absolute;
  top: 3px;
  left: 6px;
  display: flex;
  align-items: center;
  height: 16px;
  padding-right: 3px;
  background: rgba(255, 255, 255, 0.65);
}
.coin {
  width: 12px;
  height: 12px;
}
.legend-name {
  margin-left: 3px;
  font-size: 10px;
  font-weight: 500;
}
.flag {
  width: 9px;
  height: 8px;
  margin-left: 10px;
}
.status {
  display: flex;
  margin: 0 5px 0 7px;
}
.status i {
  display: flex;
  align-items: center;
  justify-content: center;
  width: 14px;
  height: 11px;
  background: #d8f0e8;
  border-radius: 6px 0 0 6px;
  font-style: normal;
}
.status .open::before {
  content: "";
  width: 6px;
  height: 6px;
  border-radius: 3px;
  background: #17a67a;
}
.status .approx {
  border-radius: 0 6px 6px 0;
  background: #f08fb8;
  color: #a81458;
}
.ohlc {
  display: flex;
  gap: 6px;
  font-size: 8px;
  font-weight: 500;
}
.orders {
  position: absolute;
  top: 21px;
  left: 5px;
  display: flex;
  align-items: center;
  padding: 0 2px 2px 0;
  background: rgba(255, 255, 255, 0.6);
}
.orders button {
  flex-direction: column;
  width: 49px;
  height: 23px;
  border: 1px solid #d0304f;
  border-radius: 4px;
  background: #fff;
  color: #d0304f;
  line-height: 10px;
}
.orders button span {
  font-size: 7px;
  line-height: 9px;
}
.orders .buy {
  border-color: #3a62d6;
  color: #3a62d6;
}
.spread {
  width: 23px;
  font-size: 7px;
  text-align: center;
}
.collapse {
  position: absolute;
  top: 49px;
  left: 6px;
  gap: 3px;
  width: 20px;
  height: 13px;
  background: rgba(255, 255, 255, 0.8);
}
.watermark {
  position: absolute;
  left: 8px;
  bottom: 4px;
  display: flex;
  align-items: center;
  gap: 5px;
  color: #0d0d0f;
  font: 600 13px/20px Inter, sans-serif;
  text-shadow: 0 0 1px #fff, 1px 1px 0 #fff, -1px -1px 0 #fff, 1px -1px 0 #fff, -1px 1px 0 #fff;
}
.watermark svg {
  width: 20px;
  height: 11px;
  overflow: visible;
  paint-order: stroke;
  stroke: #fff;
  stroke-width: 2;
}
.favbar {
  position: absolute;
  z-index: 2;
  top: -3px;
  left: 516px;
  display: flex;
  align-items: center;
  height: 24px;
  padding: 0 3px 0 5px;
  border-radius: 0 0 4px 4px;
  background: #fff;
  box-shadow: 0 1px 3px rgba(0, 0, 0, 0.25);
  clip-path: inset(0 -4px -4px -4px);
}
.favbar button {
  width: 25px;
  height: 23px;
}
.favbar .icon {
  width: 17px;
  height: 17px;
}
.grip {
  width: 6px;
  height: 10px;
  margin-right: 7px;
  stroke: #a8a8ac;
}
.price-axis {
  width: 44px;
  height: 100%;
}
.price-axis text, .time-axis text {
  font-size: 8px;
  font-weight: 500;
  fill: #1c1c1f;
}
.price-axis .tag-text, .time-axis .tag-text {
  fill: #fff;
  white-space: pre;
}
.time-axis text {
  text-anchor: middle;
}
.time-axis .bold {
  font-weight: 700;
}
.add-alert {
  position: absolute;
  top: 241px;
  right: 44px;
  width: 14px;
  height: 14px;
  border-radius: 2px 0 0 2px;
  background: #111;
}
.add-alert svg {
  width: 14px;
  height: 14px;
  fill: none;
  stroke: #fff;
}
.time-row {
  display: flex;
  align-items: center;
  height: 19px;
  flex: none;
  border-bottom: 1px solid #e9e9eb;
}
.time-axis {
  flex: 1;
  height: 19px;
}
.axis-settings {
  width: 44px;
}
.axis-settings .icon {
  width: 16px;
  height: 16px;
}
.range-row {
  display: flex;
  align-items: center;
  height: 27px;
  flex: none;
  padding: 0 7px 0 10px;
}
.ranges {
  display: flex;
  gap: 7px;
  padding-right: 7px;
  border-right: 1px solid #e9e9eb;
}
.goto {
  margin-left: 7px;
}
.clock {
  margin-left: auto;
}

/* Taskbar */
.taskbar {
  display: grid;
  grid-template-columns: 1fr auto 1fr;
  align-items: center;
  height: 32px;
  flex: none;
  background: linear-gradient(to right, #1b2529, #202830 10%, #172b2d 30%, #1a2b32 55%, #182c2f 70%, #172830);
  color: #f0f2f3;
  font-size: 8px;
  line-height: 11px;
}
.weather {
  display: flex;
  align-items: center;
  gap: 4px;
  padding-left: 12px;
}
.weather svg {
  width: 18px;
  height: 14px;
}
.dock {
  display: flex;
  align-items: center;
}
.dock button {
  position: relative;
  width: 29px;
  height: 29px;
}
.dock button svg {
  width: 18px;
  height: 18px;
}
.dock .running {
  background: #2a3b42;
  border-radius: 4px;
}
.dock .running::after, .dock .open::after {
  content: "";
  position: absolute;
  bottom: 1px;
  width: 10px;
  height: 2px;
  border-radius: 1px;
  background: #4cc2f5;
}
.dock .open::after {
  width: 4px;
  background: #9aa3a6;
}
.search {
  display: flex;
  align-items: center;
  width: 145px;
  height: 20px;
  margin: 0 2px 0 3px;
  padding: 0 2px 0 6px;
  border-radius: 10px;
  background: #f2f5f5;
  color: #5b6063;
}
.search svg {
  width: 12px;
  height: 12px;
  fill: none;
  stroke: #333;
}
.search input {
  flex: 1;
  min-width: 0;
  margin-left: 6px;
  font-size: 9px;
}
.search .doodle {
  width: 34px;
  height: 18px;
  stroke: none;
}
.tray {
  display: flex;
  align-items: center;
  justify-content: flex-end;
  gap: 9px;
  padding-right: 12px;
}
.tray svg {
  width: 12px;
  height: 12px;
  fill: none;
  stroke: #e8eced;
}
.tray .mic {
  stroke: #6fc7c0;
}
.tray .wide {
  width: 14px;
}
.tray .wide + .wide {
  margin-left: -6px;
}
.datetime {
  text-align: right;
}
```
FILE: script.js
```js
const SVG_NS = 'http://www.w3.org/2000/svg';

// [type, high, open/close top, open/close bottom, low]
// u = up, d = down, U / D = high volume
const candles = [
  ['u', 309, 317, 335, 354], ['d', 310, 317, 324, 340], ['u', 302, 308, 324, 329], ['u', 307, 308, 309, 331],
  ['d', 306, 309, 339, 340], ['d', 323, 339, 355, 359], ['u', 331, 332, 355, 372], ['u', 307, 309, 332, 391],
  ['u', 281, 295, 309, 310], ['u', 261, 275, 295, 319], ['u', 248, 249, 275, 288], ['u', 248, 249, 249, 277],
  ['d', 243, 249, 261, 291], ['u', 247, 259, 262, 268], ['u', 234, 245, 260, 274], ['d', 244, 245, 276, 295],
  ['u', 262, 269, 276, 280], ['u', 232, 234, 269, 272], ['d', 230, 234, 261, 262], ['u', 249, 259, 261, 266],
  ['d', 258, 259, 274, 288], ['d', 270, 273, 341, 341], ['u', 309, 325, 341, 353], ['u', 302, 303, 325, 326],
  ['d', 297, 303, 351, 359], ['u', 324, 325, 351, 355], ['d', 320, 325, 343, 361], ['u', 318, 322, 343, 356],
  ['u', 308, 321, 322, 333], ['u', 305, 307, 322, 322], ['u', 297, 301, 308, 319], ['d', 299, 301, 329, 330],
  ['d', 309, 329, 334, 338], ['d', 320, 333, 373, 380], ['u', 360, 361, 373, 413], ['u', 330, 361, 361, 371],
  ['u', 333, 353, 362, 372], ['d', 353, 353, 392, 424], ['u', 337, 356, 392, 393], ['d', 334, 357, 393, 396],
  ['u', 363, 379, 393, 399], ['d', 359, 379, 409, 410], ['u', 375, 379, 408, 413], ['u', 337, 345, 379, 418],
  ['d', 331, 345, 364, 373], ['d', 337, 364, 388, 397], ['d', 365, 388, 400, 408], ['d', 375, 400, 411, 413],
  ['u', 393, 403, 412, 426], ['u', 371, 399, 404, 410], ['u', 349, 359, 399, 401], ['u', 317, 319, 359, 365],
  ['u', 281, 304, 320, 339], ['d', 303, 305, 324, 336], ['d', 317, 323, 335, 346], ['u', 319, 330, 335, 345],
  ['d', 311, 330, 332, 339], ['d', 324, 332, 343, 351], ['u', 324, 331, 343, 357], ['u', 327, 330, 331, 353],
  ['d', 327, 330, 348, 357], ['d', 338, 347, 357, 367], ['u', 345, 357, 357, 363], ['d', 354, 357, 376, 388],
  ['d', 367, 376, 387, 394], ['u', 367, 381, 387, 409], ['d', 378, 381, 392, 412], ['d', 383, 392, 410, 417],
  ['d', 404, 409, 412, 437], ['u', 391, 412, 412, 420], ['d', 409, 413, 424, 433], ['D', 421, 423, 477, 482],
  ['u', 453, 459, 477, 482], ['D', 435, 437, 471, 483], ['D', 464, 470, 493, 497], ['D', 486, 493, 507, 519],
  ['D', 505, 507, 559, 559], ['D', 554, 559, 589, 591], ['u', 523, 531, 589, 626], ['u', 481, 484, 532, 553],
  ['u', 476, 478, 484, 510], ['d', 477, 478, 499, 573], ['d', 478, 499, 548, 558], ['u', 500, 507, 548, 557],
  ['u', 448, 463, 507, 513], ['u', 432, 444, 463, 480], ['u', 397, 399, 444, 450], ['u', 363, 391, 399, 414],
  ['d', 383, 392, 405, 414], ['d', 372, 405, 408, 415], ['d', 389, 407, 412, 425], ['d', 393, 411, 420, 425],
  ['u', 389, 394, 420, 420], ['d', 389, 394, 401, 406], ['u', 390, 391, 401, 417], ['d', 383, 391, 396, 399],
  ['d', 393, 396, 409, 412], ['u', 391, 394, 409, 417], ['u', 355, 355, 394, 400], ['u', 329, 337, 356, 376],
  ['U', 290, 292, 337, 340], ['d', 285, 293, 336, 337], ['d', 328, 336, 354, 360], ['d', 336, 354, 364, 377],
  ['u', 350, 363, 363, 392], ['u', 352, 359, 364, 374], ['u', 342, 347, 360, 368], ['d', 345, 347, 350, 361],
  ['d', 348, 350, 371, 372], ['u', 353, 356, 371, 386], ['u', 325, 335, 356, 361], ['d', 314, 335, 344, 350],
  ['u', 338, 342, 344, 354], ['d', 329, 342, 373, 373], ['u', 335, 340, 373, 374], ['d', 329, 339, 341, 343]
];

const candleClass = { u: 'up', d: 'down', U: 'strong-up', D: 'strong-down' };

const tags = [
  { y: 92, text: '5,044.07', color: '#e0214b' },
  { y: 121, text: '5,022.93', color: '#7d7d80' },
  { y: 110, text: '5,023.85', color: '#2d5bea' },
  { y: 209, text: '4,958.60', color: '#e0214b' },
  { y: 239, text: '4,936.86', color: '#7d7d80' },
  { y: 316, text: '4,880.25', color: '#2d5bea' },
  { y: 341, text: '4,862.53', color: '#e0214b', sub: '03:53' },
  { y: 330, text: '4,870.75', color: '#0c0c0e' },
  { y: 374, text: '4,837.97', color: '#10a37a' },
  { y: 488, text: '4,755.33', color: '#2d5bea' },
  { y: 620, text: '4,658.93', color: '#2d5bea' }
];

const times = [
  [59, '04:30'], [100, '06:00'], [141, '07:30'], [182, '09:00'], [224, '10:30'], [265, '12:00'],
  [306, '13:30'], [347, '15:00'], [388, '16:30'], [430, '18:00'], [471, '19:30'], [512, '21:00'],
  [567, '6', 'bold'], [608, '01:30'], [649, '03:00'], [690, '04:30'], [731, '06:00'], [773, '07:30'],
  [896, '12:00'], [937, '13:30'], [979, '15:00'], [1020, '16:30'], [1061, '18:00'], [1116, '20:00'], [1171, '8', 'bold']
];

function add(parent, name, attrs, text) {
  const el = document.createElementNS(SVG_NS, name);
  for (const key in attrs) el.setAttribute(key, attrs[key]);
  if (text) el.textContent = text;
  parent.appendChild(el);
}

const group = document.getElementById('candles');
candles.forEach(function (c, i) {
  const x = 38.5 + i * 6.865;
  add(group, 'line', { x1: x, x2: x, y1: c[1], y2: c[4], stroke: '#2b332e' });
  add(group, 'rect', { class: 'candle ' + candleClass[c[0]], x: x - 2.2, y: c[2], width: 4.4, height: Math.max(c[3] - c[2], 0.3) });
});

// axes start at the pane origin: x 37, y 82
const priceAxis = document.getElementById('price-axis');
for (let price = 5040; price >= 4680; price -= 20) {
  // fully covered by a tag
  if (price === 5020 || price === 4960 || price === 4880 || price === 4860) continue;
  const y = 152 + (5000 - price) * 1.3725 - 82;
  add(priceAxis, 'text', { x: 6, y: Math.round(y) + 3 }, price.toLocaleString('en-US') + '.00');
}
tags.forEach(function (tag) {
  const y = tag.y - 82;
  add(priceAxis, 'rect', { x: 1, y: y - 5, width: 40, height: tag.sub ? 20 : 11, rx: 1, fill: tag.color });
  add(priceAxis, 'text', { class: 'tag-text', x: 6, y: y + 3 }, tag.text);
  if (tag.sub) add(priceAxis, 'text', { class: 'tag-text', x: 6, y: y + 12, opacity: 0.8 }, tag.sub);
});

const timeAxis = document.getElementById('time-axis');
times.forEach(function (t) {
  add(timeAxis, 'text', { x: t[0] - 37, y: 13, class: t[2] || '' }, t[1]);
});
add(timeAxis, 'rect', { x: 754, y: 1, width: 87, height: 16, rx: 1, fill: '#0c0c0e' });
add(timeAxis, 'text', { class: 'tag-text', x: 797, y: 13 }, "Fri 06 Feb '26   09:45");
```
